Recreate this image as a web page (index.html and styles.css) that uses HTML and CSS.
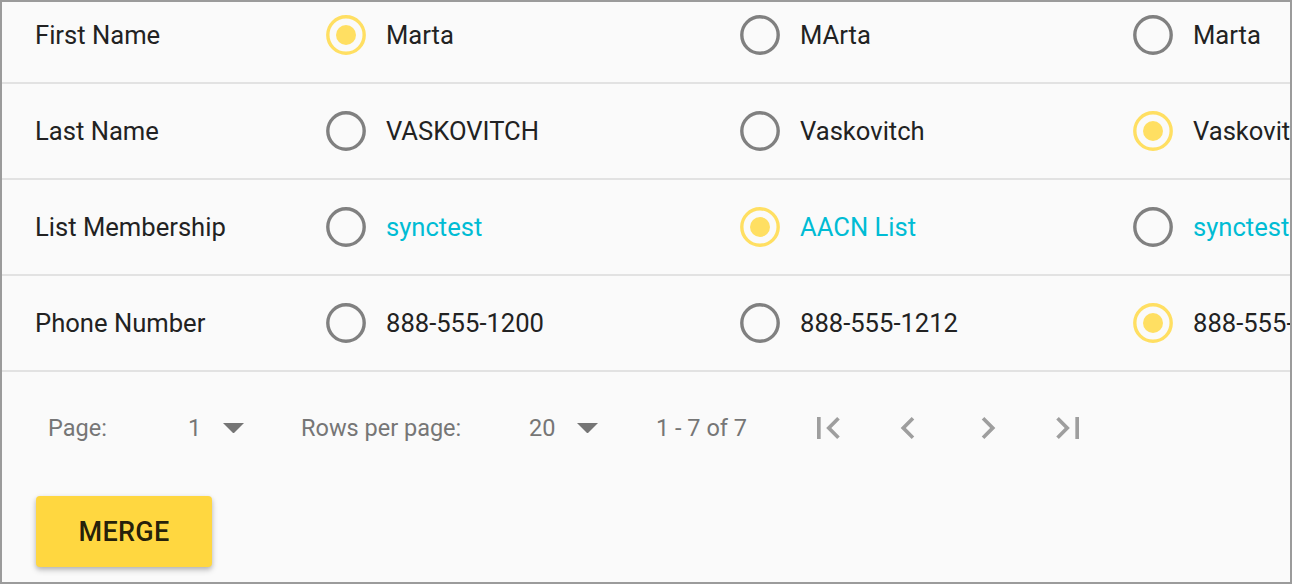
FILE: index.html
```html
<!DOCTYPE html>
<html>
<head>
<meta charset="utf-8">
<link rel="stylesheet" href="styles.css">
</head>
<body>
<div class="frame">
  <div class="table">
    <div class="row">
      <div class="label">First Name</div>
      <div class="cell"><svg class="radio on" viewBox="0 0 40 40"><circle cx="20" cy="20" r="18.2"/><circle class="dot" cx="20" cy="20" r="10"/></svg><span>Marta</span></div>
      <div class="cell"><svg class="radio" viewBox="0 0 40 40"><circle cx="20" cy="20" r="18.2"/></svg><span>MArta</span></div>
      <div class="cell"><svg class="radio" viewBox="0 0 40 40"><circle cx="20" cy="20" r="18.2"/></svg><span>Marta</span></div>
    </div>
    <div class="row">
      <div class="label">Last Name</div>
      <div class="cell"><svg class="radio" viewBox="0 0 40 40"><circle cx="20" cy="20" r="18.2"/></svg><span>VASKOVITCH</span></div>
      <div class="cell"><svg class="radio" viewBox="0 0 40 40"><circle cx="20" cy="20" r="18.2"/></svg><span>Vaskovitch</span></div>
      <div class="cell"><svg class="radio on" viewBox="0 0 40 40"><circle cx="20" cy="20" r="18.2"/><circle class="dot" cx="20" cy="20" r="10"/></svg><span>Vaskovitch</span></div>
    </div>
    <div class="row">
      <div class="label">List Membership</div>
      <div class="cell"><svg class="radio" viewBox="0 0 40 40"><circle cx="20" cy="20" r="18.2"/></svg><span class="link">synctest</span></div>
      <div class="cell"><svg class="radio on" viewBox="0 0 40 40"><circle cx="20" cy="20" r="18.2"/><circle class="dot" cx="20" cy="20" r="10"/></svg><span class="link">AACN List</span></div>
      <div class="cell"><svg class="radio" viewBox="0 0 40 40"><circle cx="20" cy="20" r="18.2"/></svg><span class="link">synctest</span></div>
    </div>
    <div class="row">
      <div class="label">Phone Number</div>
      <div class="cell"><svg class="radio" viewBox="0 0 40 40"><circle cx="20" cy="20" r="18.2"/></svg><span>888-555-1200</span></div>
      <div class="cell"><svg class="radio" viewBox="0 0 40 40"><circle cx="20" cy="20" r="18.2"/></svg><span>888-555-1212</span></div>
      <div class="cell"><svg class="radio on" viewBox="0 0 40 40"><circle cx="20" cy="20" r="18.2"/><circle class="dot" cx="20" cy="20" r="10"/></svg><span>888-555-1212</span></div>
    </div>
  </div>
  <div class="pager">
    <div class="p-label page-label">Page:</div>
    <div class="p-select sel-page"><span>1</span><svg class="drop" viewBox="0 0 10 5"><path d="M0 0l5 5 5-5z"/></svg></div>
    <div class="p-label rows-label">Rows per page:</div>
    <div class="p-select sel-rows"><span>20</span><svg class="drop" viewBox="0 0 10 5"><path d="M0 0l5 5 5-5z"/></svg></div>
    <div class="p-label range">1 - 7 of 7</div>
    <div class="nav">
      <svg class="nav-icon" viewBox="0 0 24 24"><path d="M18.41 16.59L13.82 12l4.59-4.59L17 6l-6 6 6 6zM6 6h2v12H6z"/></svg>
      <svg class="nav-icon" viewBox="0 0 24 24"><path d="M15.41 7.41L14 6l-6 6 6 6 1.41-1.41L10.83 12z"/></svg>
      <svg class="nav-icon" viewBox="0 0 24 24"><path d="M10 6L8.59 7.41 13.170 12l-4.58 4.59L10 18l6-6z"/></svg>
      <svg class="nav-icon" viewBox="0 0 24 24"><path d="M5.59 7.41L10.18 12l-4.59 4.59L7 18l6-6-6-6zM16 6h2v12h-2z"/></svg>
    </div>
  </div>
  <div class="actions">
    <button class="merge">MERGE</button>
  </div>
</div>
</body>
</html>
```
FILE: styles.css
```css
* { box-sizing: border-box; }
html, body { margin: 0; padding: 0; }
body {
  font-family: Roboto, "Noto Sans", sans-serif;
  background: #fafafa;
}
.frame {
  width: 1292px;
  height: 584px;
  border: 2px solid #9b9b9b;
  background: #fafafa;
  overflow: hidden;
}
.table {
  margin-top: -14px;
}
.row {
  display: grid;
  grid-template-columns: 324px 414px 393px 1fr;
  height: 96px;
  border-bottom: 2px solid #e2e2e2;
  align-items: center;
  font-size: 25.6px;
  color: #222;
}
.label {
  padding-left: 33px;
  white-space: nowrap;
}
.cell {
  display: flex;
  align-items: center;
  gap: 20px;
  white-space: nowrap;
}
.radio {
  width: 40px;
  height: 40px;
  flex: none;
}
.radio circle {
  fill: none;
  stroke: #808080;
  stroke-width: 3.4;
}
.radio.on circle {
  stroke: #ffdf62;
}
.radio.on circle.dot {
  fill: #ffdf62;
  stroke: none;
}
.link {
  color: #00bcd4;
}
.pager {
  display: flex;
  align-items: center;
  height: 112px;
  padding-left: 46px;
  font-size: 23.5px;
  color: #767676;
}
.p-label { white-space: nowrap; }
.page-label { width: 140px; }
.rows-label { width: 228px; }
.range { width: 150px; }
.p-select {
  display: flex;
  align-items: center;
  gap: 22px;
}
.sel-page { width: 113px; }
.sel-rows { width: 127px; }
.drop {
  width: 21px;
  height: 10.5px;
  fill: #757575;
}
.nav {
  display: flex;
  gap: 36px;
}
.nav-icon {
  width: 44px;
  height: 44px;
  fill: #9e9e9e;
}
.actions {
  padding: 12px 0 0 34px;
}
.merge {
  width: 176px;
  height: 71px;
  border: none;
  border-radius: 4px;
  background: #ffd740;
  color: rgba(0,0,0,.87);
  font-family: Roboto, sans-serif;
  font-weight: 500;
  font-size: 27px;
  letter-spacing: 0.3px;
  box-shadow: 0 3px 6px rgba(0,0,0,.2), 0 2px 4px rgba(0,0,0,.12);
  padding: 0;
}
```
